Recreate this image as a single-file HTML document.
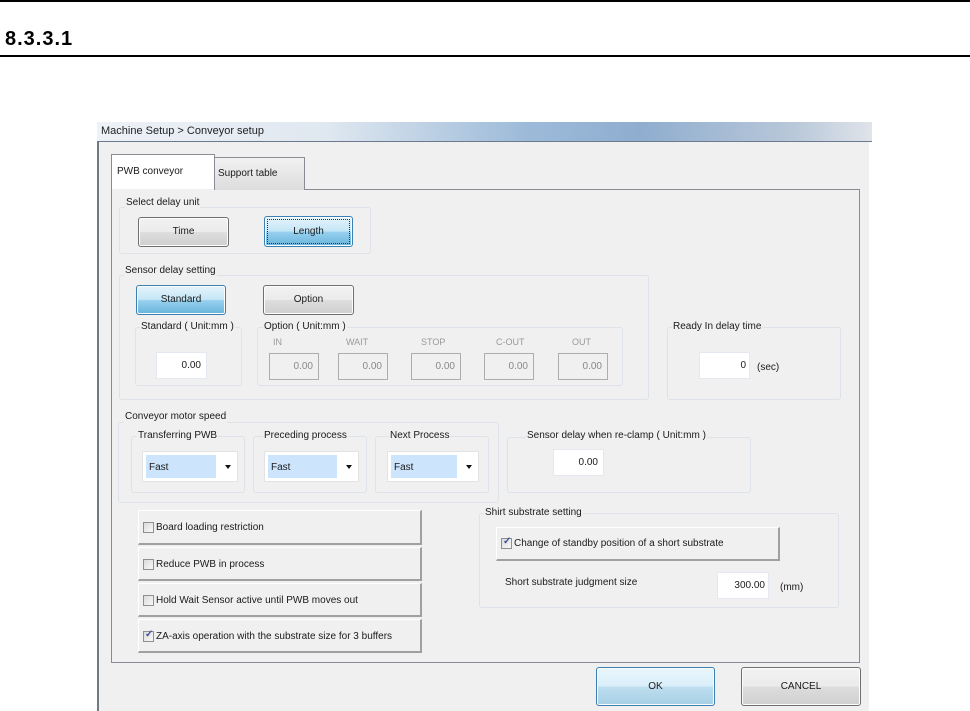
<!DOCTYPE html>
<html><head><meta charset="utf-8"><style>
*{box-sizing:border-box;margin:0;padding:0}
body{width:970px;height:711px;background:#fff;position:relative;overflow:hidden;font-family:"Liberation Sans",sans-serif;font-size:10px;color:#1a1a1a}
.a{position:absolute}
.grp{position:absolute;border:1px solid #dde3e8;border-radius:3px}
.lbl{position:absolute;background:#f0f0f0;padding:0 1px;white-space:nowrap;line-height:12px}
.btn{position:absolute;border:1px solid #707070;border-radius:3px;background:linear-gradient(#f2f2f2 0%,#ebebeb 50%,#dddddd 51%,#cfcfcf 100%);box-shadow:inset 0 0 0 1px #fcfcfc;text-align:center;font-size:10px}
.blue{border-color:#3c7fb1;background:linear-gradient(#e5f4fc 0%,#c4e5f6 50%,#98d1ef 51%,#68b3db 100%)}
.inp{position:absolute;background:#fff;border:1px solid #e3e9ef;text-align:right;padding-right:5px;font-size:10px}
.dis{background:#f0f0f0;border:1px solid #adadad;color:#888}
.sel{position:absolute;background:#fff;border:1px solid #e3e3e3}
.sel .h{position:absolute;left:3px;top:3px;bottom:3px;right:21px;background:#cce4fc;padding-left:3px;font-size:10px}
.sel .ar{position:absolute;right:6px;top:13px;width:0;height:0;border-left:3.5px solid transparent;border-right:3.5px solid transparent;border-top:4px solid #111}
.cb{position:absolute;border-top:1px solid #fff;border-left:1px solid #fff;border-right:2px solid #a0a0a0;border-bottom:2px solid #a0a0a0;background:#f0f0f0;font-size:10px}
.cb .box{position:absolute;left:4px;width:11px;height:11px;border:1px solid #8f8f8f;background:linear-gradient(135deg,#dcdcdc,#f8f8f8)}
.cb .t{position:absolute;left:17px;white-space:nowrap}
.ck{position:absolute;left:1px;top:-3px;color:#3a4fa0;font-size:10px;font-weight:bold}
</style></head><body>
<div class="a" style="left:0;top:0;width:970px;height:2px;background:#000"></div>
<div class="a" style="left:5px;top:28px;font-size:20px;font-weight:bold;color:#000;letter-spacing:1px">8.3.3.1</div>
<div class="a" style="left:0;top:55px;width:970px;height:2px;background:#000"></div>

<div class="a" style="left:97px;top:122px;width:775px;height:20px;background:linear-gradient(90deg,#eef2f7 0%,#dfe7f0 30%,#9dbbd9 55%,#8fadcf 70%,#b9c8d9 90%,#e0e4ea 100%);border-bottom:1px solid #6b7a8c"></div>
<div class="a" style="left:101px;top:125px;font-size:11px;color:#222">Machine Setup &gt; Conveyor setup</div>
<div class="a" style="left:97px;top:142px;width:775px;height:569px;background:#f0f0f0;border-left:2px solid #6f7a88"></div>
<div class="a" style="left:869px;top:142px;width:3px;height:569px;background:#fff"></div>

<div class="a" style="left:111px;top:189px;width:749px;height:474px;border:1px solid #898c95;background:#f0f0f0"></div>
<div class="a" style="left:214px;top:157px;width:91px;height:33px;border:1px solid #898c95;border-bottom:none;background:linear-gradient(#f2f2f2,#dcdcdc)"></div>
<div class="a" style="left:218px;top:168px;font-size:10px">Support table</div>
<div class="a" style="left:111px;top:154px;width:104px;height:36px;border:1px solid #898c95;border-bottom:none;background:#fff"></div>
<div class="a" style="left:117px;top:166px;font-size:10px">PWB conveyor</div>
<div class="a" style="left:112px;top:189px;width:102px;height:1px;background:#f0f0f0"></div>

<div class="grp" style="left:119px;top:207px;width:252px;height:47px"></div>
<div class="lbl" style="left:125px;top:197px">Select delay unit</div>
<div class="btn" style="left:138px;top:217px;width:91px;height:30px;line-height:28px">Time</div>
<div class="btn blue" style="left:264px;top:216px;width:89px;height:31px;line-height:29px;outline:1px dotted #333;outline-offset:-4px">Length</div>

<div class="grp" style="left:119px;top:275px;width:530px;height:125px"></div>
<div class="lbl" style="left:124px;top:265px">Sensor delay setting</div>
<div class="btn blue" style="left:136px;top:285px;width:90px;height:30px;line-height:28px">Standard</div>
<div class="btn" style="left:263px;top:285px;width:91px;height:30px;line-height:28px">Option</div>

<div class="grp" style="left:135px;top:327px;width:107px;height:59px"></div>
<div class="lbl" style="left:140px;top:321px">Standard ( Unit:mm )</div>
<div class="inp" style="left:156px;top:352px;width:51px;height:27px;line-height:25px">0.00</div>

<div class="grp" style="left:257px;top:327px;width:366px;height:59px"></div>
<div class="lbl" style="left:263px;top:321px">Option ( Unit:mm )</div>
<div class="a" style="left:273px;top:337px;color:#999;font-size:9px">IN</div>
<div class="a" style="left:346px;top:337px;color:#999;font-size:9px">WAIT</div>
<div class="a" style="left:421px;top:337px;color:#999;font-size:9px">STOP</div>
<div class="a" style="left:496px;top:337px;color:#999;font-size:9px">C-OUT</div>
<div class="a" style="left:572px;top:337px;color:#999;font-size:9px">OUT</div>
<div class="inp dis" style="left:269px;top:353px;width:50px;height:27px;line-height:25px">0.00</div>
<div class="inp dis" style="left:338px;top:353px;width:50px;height:27px;line-height:25px">0.00</div>
<div class="inp dis" style="left:411px;top:353px;width:50px;height:27px;line-height:25px">0.00</div>
<div class="inp dis" style="left:484px;top:353px;width:50px;height:27px;line-height:25px">0.00</div>
<div class="inp dis" style="left:558px;top:353px;width:50px;height:27px;line-height:25px">0.00</div>

<div class="grp" style="left:667px;top:327px;width:174px;height:73px"></div>
<div class="lbl" style="left:672px;top:321px">Ready In delay time</div>
<div class="inp" style="left:699px;top:352px;width:51px;height:27px;line-height:25px;padding-right:3px">0</div>
<div class="a" style="left:757px;top:362px">(sec)</div>

<div class="grp" style="left:118px;top:422px;width:381px;height:81px"></div>
<div class="lbl" style="left:124px;top:411px">Conveyor motor speed</div>
<div class="grp" style="left:131px;top:436px;width:114px;height:57px"></div>
<div class="lbl" style="left:137px;top:430px">Transferring PWB</div>
<div class="sel" style="left:142px;top:451px;width:96px;height:31px"><div class="h" style="line-height:25px">Fast</div><div class="ar"></div></div>
<div class="grp" style="left:253px;top:436px;width:114px;height:57px"></div>
<div class="lbl" style="left:263px;top:430px">Preceding process</div>
<div class="sel" style="left:264px;top:451px;width:95px;height:31px"><div class="h" style="line-height:25px">Fast</div><div class="ar"></div></div>
<div class="grp" style="left:375px;top:436px;width:114px;height:57px"></div>
<div class="lbl" style="left:389px;top:430px">Next Process</div>
<div class="sel" style="left:387px;top:451px;width:92px;height:31px"><div class="h" style="line-height:25px">Fast</div><div class="ar"></div></div>

<div class="grp" style="left:507px;top:437px;width:244px;height:56px"></div>
<div class="lbl" style="left:526px;top:430px">Sensor delay when re-clamp ( Unit:mm )</div>
<div class="inp" style="left:553px;top:449px;width:51px;height:27px;line-height:25px">0.00</div>

<div class="cb" style="left:138px;top:510px;width:284px;height:35px"><div class="box" style="top:11px"></div><div class="t" style="top:11px">Board loading restriction</div></div>
<div class="cb" style="left:138px;top:547px;width:284px;height:34px"><div class="box" style="top:11px"></div><div class="t" style="top:11px">Reduce PWB in process</div></div>
<div class="cb" style="left:138px;top:583px;width:284px;height:34px"><div class="box" style="top:11px"></div><div class="t" style="top:11px">Hold Wait Sensor active until PWB moves out</div></div>
<div class="cb" style="left:138px;top:619px;width:284px;height:34px"><div class="box" style="top:11px"><span class="ck">✓</span></div><div class="t" style="top:11px">ZA-axis operation with the substrate size for 3 buffers</div></div>

<div class="grp" style="left:479px;top:513px;width:360px;height:95px"></div>
<div class="lbl" style="left:484px;top:507px">Shirt substrate setting</div>
<div class="cb" style="left:496px;top:527px;width:284px;height:34px"><div class="box" style="top:10px"><span class="ck">✓</span></div><div class="t" style="top:10px">Change of standby position of a short substrate</div></div>
<div class="a" style="left:505px;top:577px">Short substrate judgment size</div>
<div class="inp" style="left:717px;top:572px;width:52px;height:27px;line-height:25px;padding-right:3px">300.00</div>
<div class="a" style="left:780px;top:582px">(mm)</div>

<div class="btn" style="left:596px;top:667px;width:119px;height:39px;line-height:37px;border-color:#3c7fb1;background:linear-gradient(#eaf6fd,#d9eef9 50%,#bedeee 51%,#a7d0e6)">OK</div>
<div class="btn" style="left:741px;top:667px;width:120px;height:39px;line-height:37px">CANCEL</div>
</body></html>
